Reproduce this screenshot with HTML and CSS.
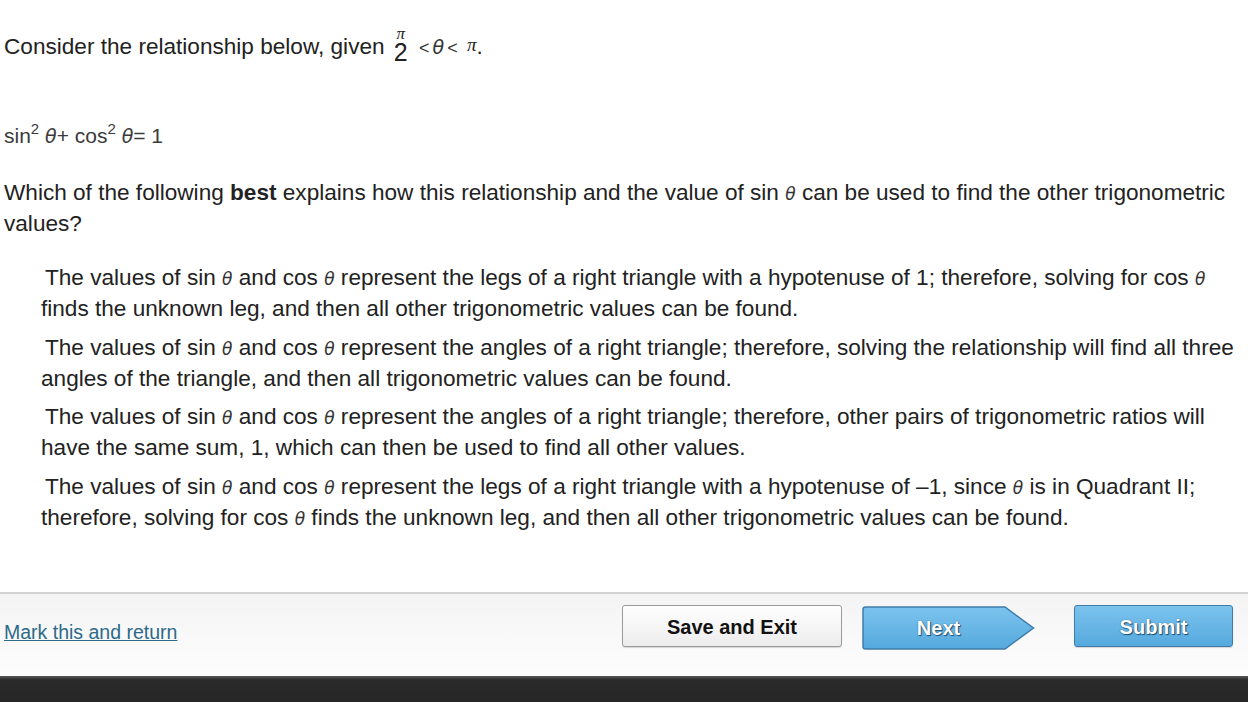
FILE: index.html
```html
<!DOCTYPE html>
<html lang="en">
<head>
<meta charset="utf-8">
<title>Question</title>
<link rel="stylesheet" href="styles.css">
</head>
<body>
<div class="page">
  <main class="content">
    <p class="intro">Consider the relationship below, given <span class="frac"><span class="num">π</span><span class="den">2</span></span> <span class="small">&lt;</span><span class="th-lg">θ</span><span class="small">&lt;</span> <span class="pi">π</span>.</p>
    <p class="equation">sin<sup>2</sup> <span class="th-eq">θ</span>+ cos<sup>2</sup> <span class="th-eq">θ</span>= 1</p>
    <p class="question">Which of the following <b>best</b> explains how this relationship and the value of sin <span class="th">θ</span> can be used to find the other trigonometric values?</p>
    <ul class="answers">
      <li class="answer">The values of sin <span class="th">θ</span> and cos <span class="th">θ</span> represent the legs of a right triangle with a hypotenuse of 1; therefore, solving for cos <span class="th">θ</span> finds the unknown leg, and then all other trigonometric values can be found.</li>
      <li class="answer">The values of sin <span class="th">θ</span> and cos <span class="th">θ</span> represent the angles of a right triangle; therefore, solving the relationship will find all three angles of the triangle, and then all trigonometric values can be found.</li>
      <li class="answer">The values of sin <span class="th">θ</span> and cos <span class="th">θ</span> represent the angles of a right triangle; therefore, other pairs of trigonometric ratios will have the same sum, 1, which can then be used to find all other values.</li>
      <li class="answer">The values of sin <span class="th">θ</span> and cos <span class="th">θ</span> represent the legs of a right triangle with a hypotenuse of –1, since <span class="th">θ</span> is in Quadrant II; therefore, solving for cos <span class="th">θ</span> finds the unknown leg, and then all other trigonometric values can be found.</li>
    </ul>
  </main>
  <footer class="footer">
    <a class="mark" href="#">Mark this and return</a>
    <div class="buttons">
      <button class="btn btn-save" type="button">Save and Exit</button>
      <button class="btn-next" type="button">
        <svg class="next-shape" width="173" height="44" viewBox="0 0 173 44" aria-hidden="true">
          <defs>
            <linearGradient id="ng" x1="0" y1="0" x2="0" y2="1">
              <stop offset="0" stop-color="#7cc3ee"/>
              <stop offset="1" stop-color="#55a9dd"/>
            </linearGradient>
          </defs>
          <path d="M3.5 1 H143 L171.5 22 L143 43 H3.5 Q1 43 1 40.5 V3.5 Q1 1 3.5 1 Z" fill="url(#ng)" stroke="#3f7ca8" stroke-width="1.5"/>
        </svg>
        <span class="next-label">Next</span>
      </button>
      <button class="btn btn-blue" type="button">Submit</button>
    </div>
  </footer>
  <div class="bottombar"></div>
</div>
</body>
</html>
```

FILE: styles.css
```css
html, body {
  margin: 0;
  padding: 0;
  background: #ffffff;
}

body {
  font-family: "Liberation Sans", Arial, sans-serif;
  color: #222222;
}

.page {
  display: flex;
  flex-direction: column;
  height: 702px;
  overflow: hidden;
}

.content {
  flex: 1;
  padding: 0 4px;
  font-size: 22.6px;
  line-height: 31px;
}

.intro {
  margin: 31px 0 0 0;
  height: 31px;
}

.frac {
  display: inline-flex;
  flex-direction: column;
  align-items: center;
  justify-content: space-between;
  height: 34px;
  vertical-align: top;
  margin: -3px 5px 0 3px;
  line-height: 1;
}

.frac .num {
  font-family: "Liberation Serif", serif;
  font-style: italic;
  font-size: 17px;
  line-height: 12px;
}

.frac .den {
  font-size: 25px;
  line-height: 20px;
}

.small {
  font-size: 18px;
  line-height: 0;
  color: #333333;
}

.th-lg {
  font-family: "DejaVu Sans", sans-serif;
  font-style: italic;
  font-size: 19px;
  line-height: 0;
  margin: 0 3px;
  color: #333333;
}

.pi {
  font-family: "Liberation Serif", serif;
  font-style: italic;
  font-size: 19px;
  line-height: 0;
  vertical-align: 3px;
  margin-left: 3px;
}

.equation {
  margin: 58px 0 0 0;
  color: #3a3a3a;
  font-size: 21px;
}

.equation sup {
  font-size: 15px;
  line-height: 0;
  vertical-align: 9px;
}

.th-eq {
  font-family: "DejaVu Sans", sans-serif;
  font-style: italic;
  font-size: 19px;
  line-height: 0;
  font-weight: 300;
}

.question {
  margin: 26px 0 0 0;
}

.th {
  font-family: "DejaVu Sans", sans-serif;
  font-style: italic;
  font-size: 17px;
  line-height: 0;
  color: #333333;
}

.answers {
  list-style: none;
  margin: 23px 0 0 0;
  padding: 0 0 0 37px;
}

.answer {
  margin: 0 0 7.5px 0;
  text-indent: 4px;
}

.footer {
  height: 71px;
  border-top: 2px solid #d2d2d2;
  background: linear-gradient(#f4f4f4, #fdfdfd);
  display: flex;
  align-items: flex-start;
  padding: 11px 15px 0 4px;
}

.mark {
  color: #2d6a8a;
  font-size: 19.5px;
  line-height: 24px;
  margin-top: 15px;
  text-decoration: underline;
}

.buttons {
  margin-left: auto;
  display: flex;
  align-items: flex-start;
}

.btn {
  height: 42px;
  font-family: "Liberation Sans", Arial, sans-serif;
  font-size: 20px;
  font-weight: bold;
  border-radius: 3px;
  cursor: pointer;
  padding: 0;
}

.btn-save {
  width: 220px;
  color: #111111;
  background: linear-gradient(#ffffff, #ececec);
  border: 1px solid #9a9a9a;
  box-shadow: 0 1px 1px rgba(0,0,0,0.15);
  margin-right: 20px;
  padding-top: 2px;
}

.btn-next {
  position: relative;
  display: flex;
  align-items: center;
  width: 173px;
  height: 44px;
  padding: 0;
  border: 0;
  background: transparent;
  margin-top: 1px;
  margin-right: 39px;
  cursor: pointer;
}

.next-shape {
  position: absolute;
  left: 0;
  top: 0;
}

.next-label {
  position: relative;
  display: block;
  width: 153px;
  text-align: center;
  font-family: "Liberation Sans", Arial, sans-serif;
  font-size: 20px;
  font-weight: bold;
  color: #ffffff;
  text-shadow: 1px 1px 1px #1d4c6e, 0 0 1px #1d4c6e;
}

.btn-blue {
  width: 159px;
  color: #ffffff;
  background: linear-gradient(#7cc3ee, #55a9dd);
  border: 1.5px solid #3f7ca8;
  text-shadow: 1px 1px 1px #1d4c6e, 0 0 1px #1d4c6e;
  box-shadow: 0 1px 1px rgba(0,0,0,0.15);
  padding-top: 2px;
}

.bottombar {
  height: 26px;
  background: linear-gradient(#5a5a5a 0, #2a2a2a 4px, #262626 100%);
}
```
